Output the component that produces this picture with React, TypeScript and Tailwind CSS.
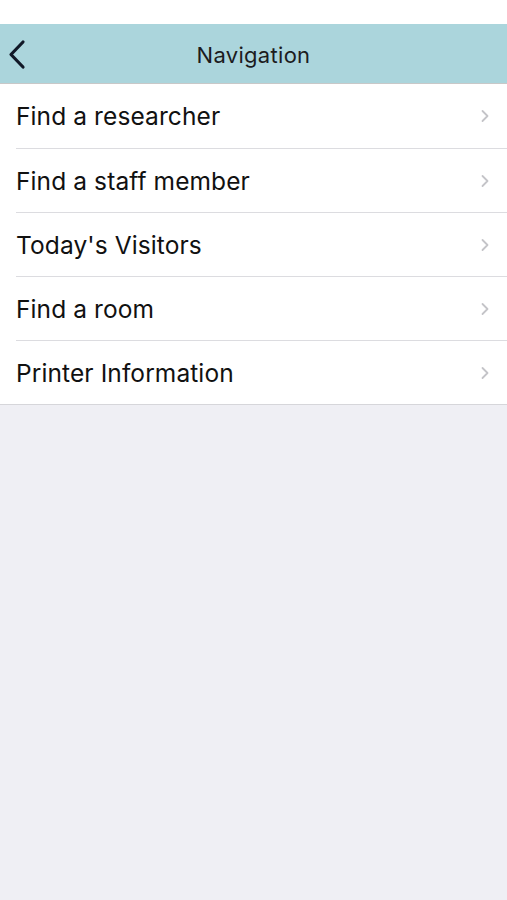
import React from "react";

const items = [
  "Find a researcher",
  "Find a staff member",
  "Today's Visitors",
  "Find a room",
  "Printer Information",
];

export default function App() {
  return (
    <div className="w-[507px] h-[900px] bg-[#efeff4] flex flex-col" style={{ fontFamily: "Inter, 'Liberation Sans', sans-serif" }}>
      <div className="h-[24px] bg-white" />
      <div className="h-[60px] bg-[#abd5dc] relative flex items-center justify-center border-b border-[#c8c8c8]">
        <svg className="absolute left-[7px] top-[15px]" width="20" height="32" viewBox="0 0 20 32" fill="none">
          <path d="M16 3 L4 15.5 L16 28" stroke="#111827" strokeWidth="3.2" strokeLinecap="round" strokeLinejoin="round" />
        </svg>
        <span className="text-[22px] tracking-[0.3px] text-[#1c1c1e] mt-[3px]">Navigation</span>
      </div>
      <div className="bg-white border-b border-[#d6d6da]">
        {items.map((t, i) => (
          <div key={t} className="h-[64px] flex">
            <div className={`flex-1 ml-[16px] flex items-center justify-between ${i > 0 ? "border-t border-[#dcdce0]" : ""}`}>
              <span className="text-[24.5px] text-[#111] tracking-[0.1px] mt-[1px]">{t}</span>
              <svg className="mr-[17px]" width="10" height="16" viewBox="0 0 10 16" fill="none">
                <path d="M2.5 3 L7.5 8 L2.5 13" stroke="#c4c4c8" strokeWidth="1.8" strokeLinecap="round" strokeLinejoin="round" />
              </svg>
            </div>
          </div>
        ))}
      </div>
    </div>
  );
}
